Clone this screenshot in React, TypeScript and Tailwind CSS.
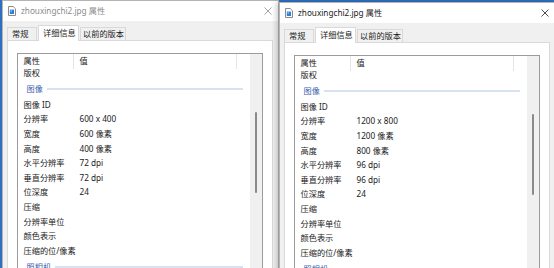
import React from "react";

type Row = { k: string; v?: string } | { group: string };

function rowsFor(res: string, w: string, h: string, dpi: string): Row[] {
  return [
    { k: "版权" },
    { group: "图像" },
    { k: "图像 ID" },
    { k: "分辨率", v: res },
    { k: "宽度", v: `${w} 像素` },
    { k: "高度", v: `${h} 像素` },
    { k: "水平分辨率", v: `${dpi} dpi` },
    { k: "垂直分辨率", v: `${dpi} dpi` },
    { k: "位深度", v: "24" },
    { k: "压缩" },
    { k: "分辨率单位" },
    { k: "颜色表示" },
    { k: "压缩的位/像素" },
    { group: "照相机" },
  ];
}

function FileIcon() {
  return (
    <svg width="8" height="10" viewBox="0 0 8 10" className="shrink-0">
      <path d="M0.5 0.5 H5.2 L7.5 2.8 V9.5 H0.5 Z" fill="#fff" stroke="#8a8a8a" strokeWidth="1" />
      <rect x="1.8" y="3.6" width="4.2" height="4.4" fill="#2f7fd8" />
      <rect x="2.6" y="4.4" width="1.4" height="1.2" fill="#9fd0ff" />
    </svg>
  );
}

function CloseIcon({ color }: { color: string }) {
  return (
    <svg width="8" height="8" viewBox="0 0 8 8">
      <path d="M0.5 0.5 L7.5 7.5 M7.5 0.5 L0.5 7.5" stroke={color} strokeWidth="0.9" />
    </svg>
  );
}

function PropWindow({
  active,
  rows,
  className,
}: {
  active: boolean;
  rows: Row[];
  className: string;
}) {
  return (
    <div className={`absolute h-[290px] w-[277px] border border-[#b4b4b4] bg-[#f0f0f0] ${className}`}>
      {/* title bar */}
      <div className="flex h-[20px] items-center bg-white">
        <span className="ml-[5px] flex">
          <FileIcon />
        </span>
        <span
          className={`ml-[5px] text-[8.2px] leading-none ${
            active ? "text-[#1a1a1a]" : "text-[#8c8c8c]"
          }`}
        >
          zhouxingchi2.jpg 属性
        </span>
        <span className="ml-auto flex w-[21px] justify-center">
          <CloseIcon color={active ? "#3a3a3a" : "#9a9a9a"} />
        </span>
      </div>

      <div className="pl-[4px]">
        {/* tabs */}
        <div className="relative z-10 flex h-[19px] items-end whitespace-nowrap text-[8.2px] text-[#1a1a1a]">
          <div className="mb-[-1px] flex h-[14px] w-[30px] items-center border border-[#d9d9d9] bg-[#f0f0f0] pl-[4px]">
            常规
          </div>
          <div className="mb-[-1px] ml-[1px] flex h-[16px] w-[41px] items-center border border-b-0 border-[#d9d9d9] bg-white pl-[4px]">
            详细信息
          </div>
          <div className="mb-[-1px] ml-[1px] flex h-[14px] w-[46px] items-center border border-[#d9d9d9] bg-[#f0f0f0] pl-[2px]">
            以前的版本
          </div>
        </div>

        {/* tab page */}
        <div className="h-[260px] w-[266px] border border-[#d9d9d9] bg-white px-[9px] pt-[12px]">
          <div className="flex h-[240px] w-[246px] border border-[#9c9c9c] bg-white">
            <div className="w-[232px] overflow-hidden">
              <div className="relative z-10 flex h-[15px] items-center bg-white text-[8.2px] text-[#1a1a1a]">
                <div className="flex h-full w-[56px] items-center border-r border-[#e5e5e5] pl-[5.5px]">属性</div>
                <div className="flex h-full w-[163px] items-center border-r border-[#e5e5e5] pl-[5.5px]">值</div>
              </div>
              <div className="mt-[-3.6px] text-[8.2px] text-[#1a1a1a]">
                {rows.map((r, i) =>
                  "group" in r ? (
                    <div key={i} className="flex h-[17.7px] items-center pl-[8.5px] pr-[7px]">
                      <span className="text-[#3b5fae]">{r.group}</span>
                      <span className="ml-[4px] h-[1.5px] flex-1 bg-[#d8e1f1]" />
                    </div>
                  ) : (
                    <div key={i} className="flex h-[14.6px] items-center whitespace-nowrap">
                      <span className="w-[56px] pl-[5.5px]">{r.k}</span>
                      <span className="pl-[5.5px]">{r.v ?? ""}</span>
                    </div>
                  )
                )}
              </div>
            </div>
            {/* scrollbar track */}
            <div className="relative w-[12px] bg-[#f0f0f0]">
              <div className="absolute left-[5px] top-[58px] h-[81px] w-[2px] rounded-full bg-[#8a8a8a]" />
            </div>
          </div>
        </div>
      </div>
    </div>
  );
}

export default function App() {
  return (
    <div className="relative h-[268px] w-[554px] overflow-hidden bg-[#2f6fbf] font-['Noto_Sans','Noto_Sans_CJK_SC',sans-serif]">
      <PropWindow
        active={false}
        className="left-[2px] top-[0px]"
        rows={rowsFor("600 x 400", "600", "400", "72")}
      />
      <PropWindow
        active
        className="left-[279px] top-[2px] border-[#8c8c8c] shadow-[-3px_0_5px_rgba(0,0,0,0.18)]"
        rows={rowsFor("1200 x 800", "1200", "800", "96")}
      />
    </div>
  );
}
